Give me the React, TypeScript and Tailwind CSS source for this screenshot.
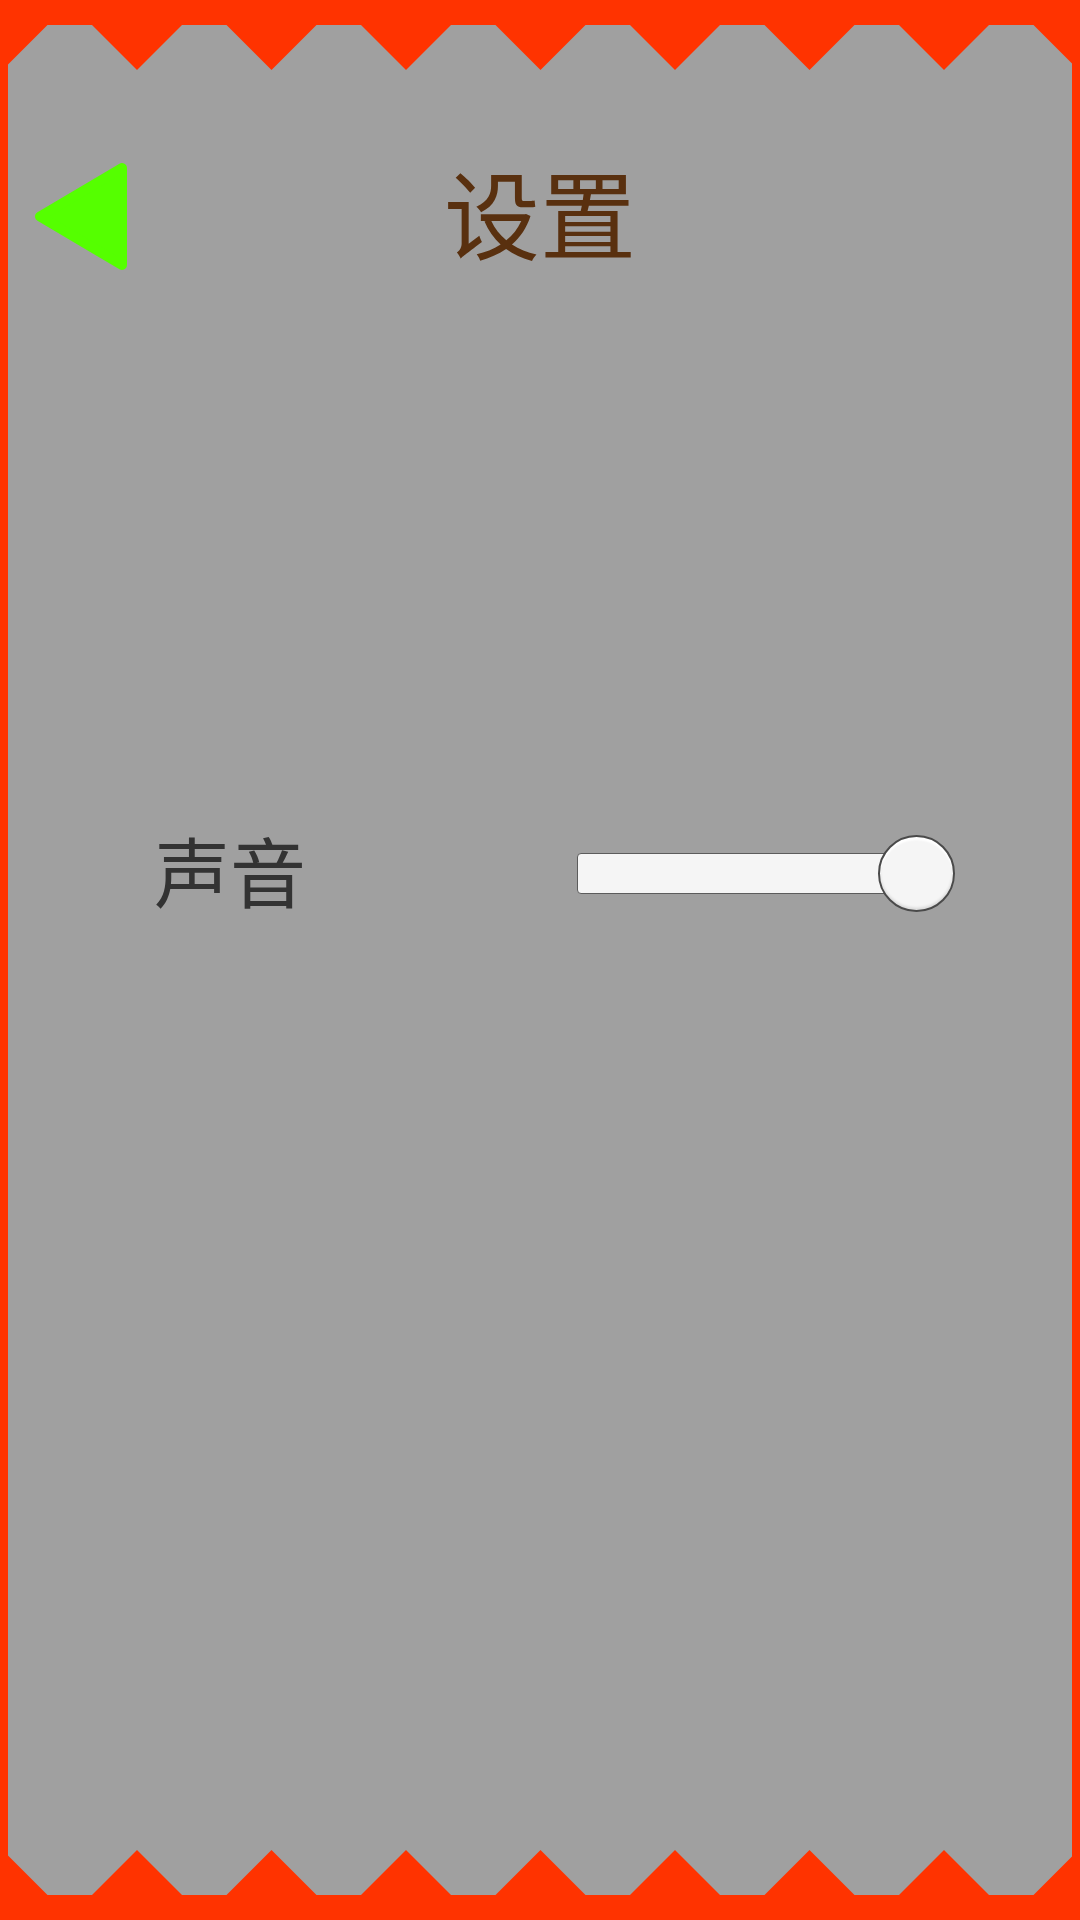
import React from 'react'

const PEAKS = Array.from({ length: 9 }, (_, k) => 2.5 + 134.5 * k)

function Zigzag({ flip }: { flip?: boolean }) {
  // red band with downward teeth, mirrored for the bottom edge
  return (
    <svg
      className={`absolute left-0 w-[1080px] h-[70px] ${flip ? 'bottom-0 -scale-y-100' : 'top-0'}`}
      viewBox="0 0 1080 70"
    >
      <rect x="0" y="0" width="1080" height="25" fill="#ff3300" />
      {PEAKS.map(x => (
        <polygon key={x} points={`${x - 45},25 ${x + 45},25 ${x},70`} fill="#ff3300" />
      ))}
    </svg>
  )
}

function BackButton() {
  return (
    <button className="w-[92px] h-[107px]">
      <svg viewBox="0 0 92 107" className="w-[92px] h-[107px]">
        <polygon
          points="5,53.5 87,5 87,102"
          fill="#55ff00"
          stroke="#55ff00"
          strokeWidth={10}
          strokeLinejoin="round"
        />
      </svg>
    </button>
  )
}

function VolumeSlider() {
  return (
    <div className="relative w-[378px] h-[77px]">
      <div className="absolute left-0 top-[18px] h-[41px] w-[340px] rounded-[4px] border border-[#5c5c5c] bg-[#f5f5f5]" />
      <div className="absolute right-0 top-0 w-[77px] h-[77px] rounded-full border-2 border-[#4a4a4a] bg-[#f5f5f5] shadow-[inset_0_3px_2px_rgba(255,255,255,1),inset_0_-2px_3px_rgba(0,0,0,0.12)]" />
    </div>
  )
}

export default function App() {
  return (
    <div
      className="relative w-[1080px] h-[1920px] bg-[#ff3300] px-[8px] overflow-hidden"
      style={{ fontFamily: '"Noto Sans CJK SC", "Noto Sans", sans-serif' }}
    >
      <div className="h-full bg-[#a0a0a0] flex flex-col">
        <div className="mt-[163px] grid grid-cols-[1fr_auto_1fr] items-center h-[107px]">
          <div className="pl-[27px] flex items-center">
            <BackButton />
          </div>
          <h1 className="text-[96px] leading-none text-[#59300f] -mt-[11px]">设置</h1>
          <div />
        </div>

        <div className="mt-[565px] flex items-center h-[77px] pl-[146px] pr-[117px]">
          <span className="text-[76px] leading-none text-[#333333] -mt-[10px]">声音</span>
          <div className="ml-auto">
            <VolumeSlider />
          </div>
        </div>
      </div>
      <Zigzag />
      <Zigzag flip />
    </div>
  )
}
